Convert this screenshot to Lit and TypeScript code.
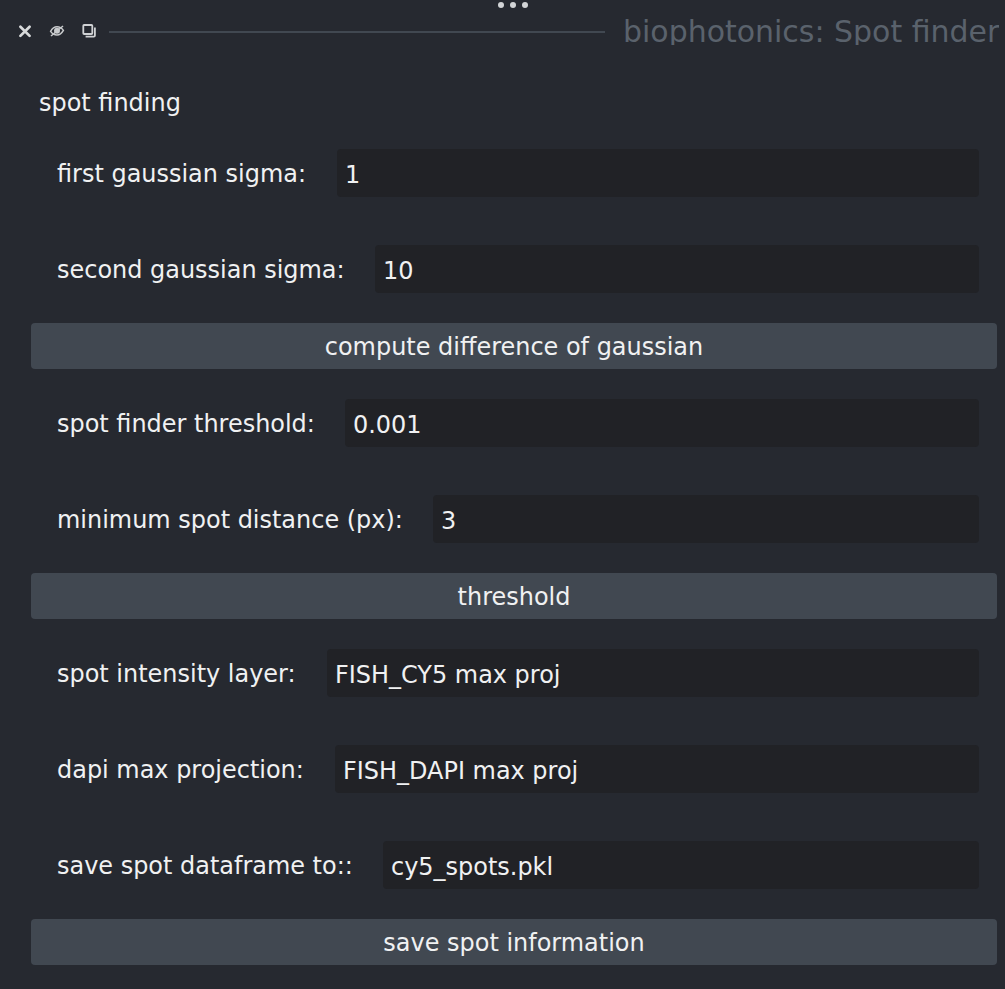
import { LitElement, html, css } from "lit";
import { customElement, property } from "lit/decorators.js";

@customElement("field-row")
class FieldRow extends LitElement {
  @property() label = "";
  @property() value = "";
  @property({ type: Number }) labelWidth = 280;
  static styles = css`
    :host { display: flex; height: 48px; padding: 0 26px 0 57px; align-items: center; }
    .label { flex: none; white-space: nowrap; height: 28px; line-height: 30px; }
    .box { flex: 1; height: 48px; border-radius: 4px; background: #212226; line-height: 52px; padding-left: 8px; white-space: nowrap; box-sizing: border-box; }
  `;
  render() {
    return html`<span class="label" style="width:${this.labelWidth}px">${this.label}</span><div class="box">${this.value}</div>`;
  }
}

@customElement("app-root")
class AppRoot extends LitElement {
  static styles = css`
    :host { display: block; width: 1005px; height: 989px; overflow: hidden; background: #262930; color: #f0f1f2; font: 23.96px "DejaVu Sans", sans-serif; }
    .dots { display: flex; justify-content: center; gap: 6px; height: 8px; padding: 2px 0 0 21px; box-sizing: border-box; }
    .dots i { width: 6px; height: 6px; border-radius: 50%; background: #d2d4d6; }
    .title { display: flex; align-items: center; height: 46px; padding-left: 17px; }
    .title svg { width: 16px; height: 16px; margin-right: 16px; flex: none; }
    .line { flex: none; width: 496px; height: 2px; background: #414851; margin: 2px 0 0 -4px; }
    .name { font-size: 29.96px; line-height: 36px; height: 31px; margin: -3px 0 0 18px; overflow: hidden; color: #5a626c; white-space: nowrap; }
    .head { padding: 35px 0 0 39px; height: 95px; box-sizing: border-box; line-height: 28px; }
    .fields { display: grid; gap: 48px; }
    .btn { margin: 30px 8px 30px 31px; height: 46px; border-radius: 4px; background: #414851; text-align: center; line-height: 48px; }
  `;
  render() {
    return html`
      <div class="dots"><i></i><i></i><i></i></div>
      <div class="title">
        <svg viewBox="0 0 16 16"><path d="M3.4 3.7l9.2 9.2M12.6 3.7L3.4 12.9" stroke="#d8dadb" stroke-width="2.7" stroke-linecap="round"/></svg>
        <svg viewBox="0 0 16 16" fill="none" stroke="#c8cacc" stroke-width="1.5"><path d="M1.6 8.4Q4.2 3.8 8 3.8T14.4 7.4Q11.8 12 8 12T1.6 8.4Z"/><circle cx="8" cy="7.8" r="3" fill="#c8cacc" stroke="none"/><path d="M2 13L14 3"/></svg>
        <svg viewBox="0 0 16 16" fill="none" stroke="#d0d2d4" stroke-width="1.8"><rect x="2.3" y="2" width="9" height="9" rx=".8"/><path d="M13.9 4.4v8.2q0 1.1-1.1 1.1H4.6"/></svg>
        <div class="line"></div><div class="name">biophotonics: Spot finder</div>
      </div>
      <div class="head">spot finding</div>
      <div class="fields">
        <field-row label="first gaussian sigma:" value="1" .labelWidth=${280}></field-row>
        <field-row label="second gaussian sigma:" value="10" .labelWidth=${318}></field-row>
      </div>
      <div class="btn">compute difference of gaussian</div>
      <div class="fields">
        <field-row label="spot finder threshold:" value="0.001" .labelWidth=${288}></field-row>
        <field-row label="minimum spot distance (px):" value="3" .labelWidth=${376}></field-row>
      </div>
      <div class="btn">threshold</div>
      <div class="fields">
        <field-row label="spot intensity layer:" value="FISH_CY5 max proj" .labelWidth=${270}></field-row>
        <field-row label="dapi max projection:" value="FISH_DAPI max proj" .labelWidth=${278}></field-row>
        <field-row label="save spot dataframe to::" value="cy5_spots.pkl" .labelWidth=${326}></field-row>
      </div>
      <div class="btn">save spot information</div>`;
  }
}
